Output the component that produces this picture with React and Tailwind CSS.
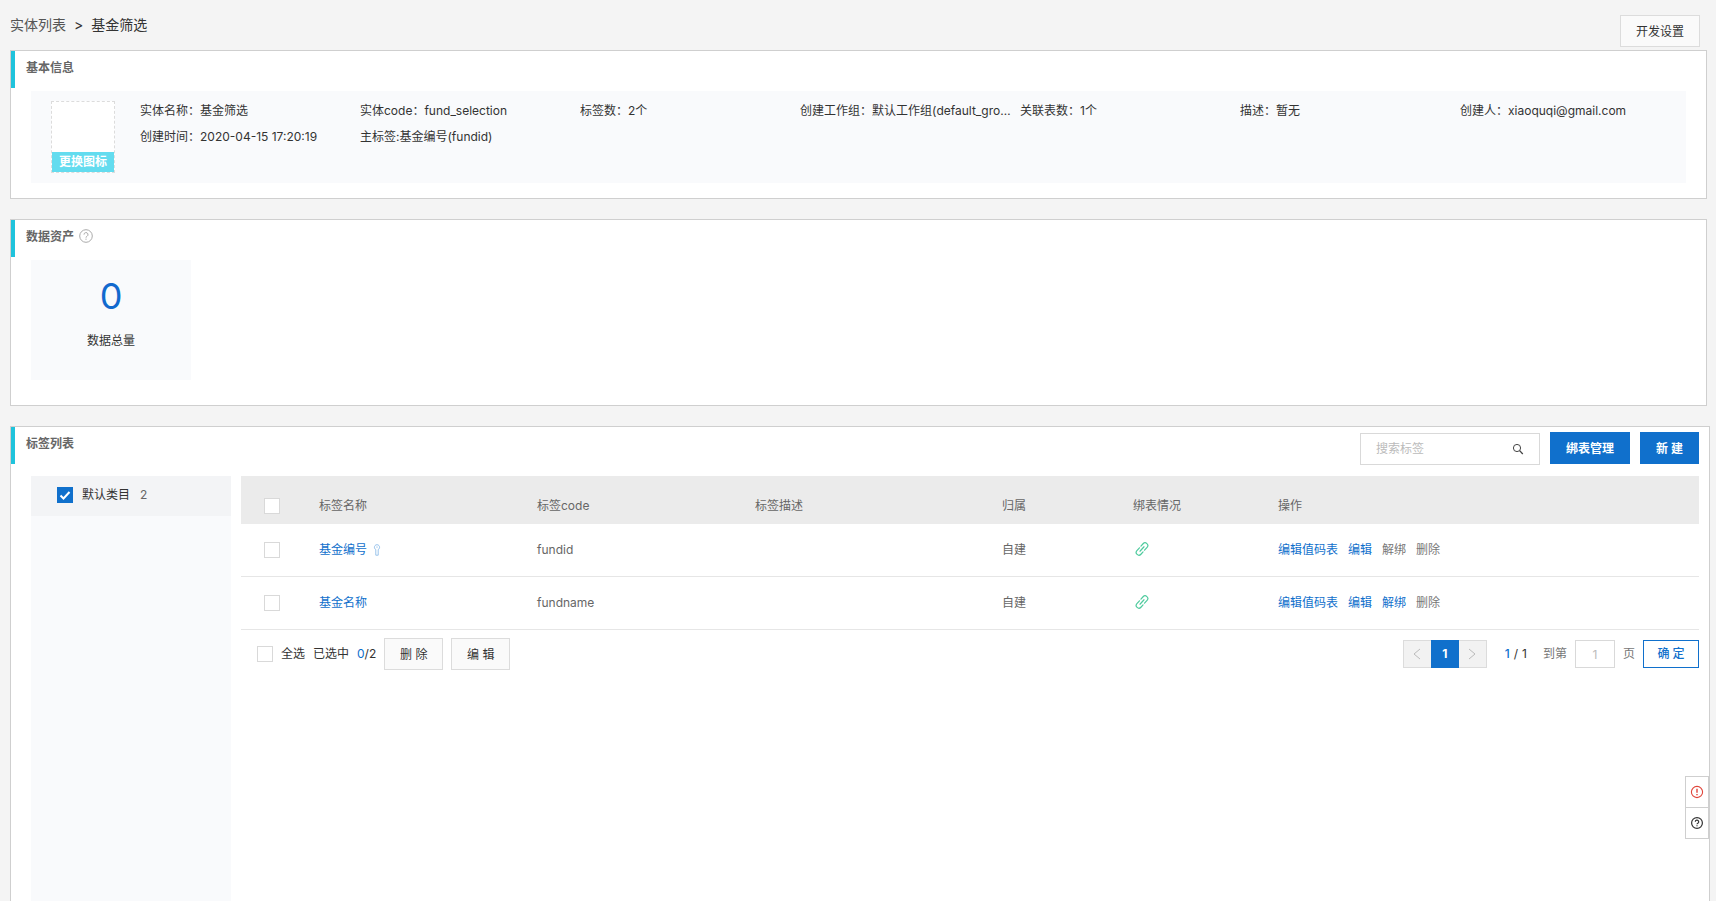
import { useState } from 'react';

const FONT = "font-['Inter','Noto_Sans_CJK_SC',sans-serif]";

const entityInfo = [
  { label: '实体名称：', value: '基金筛选' },
  { label: '实体code：', value: 'fund_selection' },
  { label: '标签数：', value: '2个' },
  { label: '创建工作组：', value: '默认工作组(default_group)' },
  { label: '关联表数：', value: '1个' },
  { label: '描述：', value: '暂无' },
  { label: '创建人：', value: 'xiaoquqi@gmail.com' },
  { label: '创建时间：', value: '2020-04-15 17:20:19' },
  { label: '主标签:', value: '基金编号(fundid)' },
];

const tags = [
  { name: '基金编号', code: 'fundid', desc: '', owner: '自建', isPrimary: true },
  { name: '基金名称', code: 'fundname', desc: '', owner: '自建', isPrimary: false },
];

function HelpIcon({ className, strokeWidth = 1 }) {
  return (
    <svg
      viewBox="0 0 14 14"
      fill="none"
      stroke="currentColor"
      strokeWidth={strokeWidth}
      className={className}
      aria-hidden="true"
    >
      <circle cx="7" cy="7" r="6.3" />
      <path d="M5 5.6a2 2 0 1 1 3 1.7c-.7.4-1 .7-1 1.3M7 9.6v1.2" />
    </svg>
  );
}

function AlertIcon({ className }) {
  return (
    <svg viewBox="0 0 14 14" fill="none" stroke="currentColor" className={className} aria-hidden="true">
      <circle cx="7" cy="7" r="5.6" strokeWidth="1.1" />
      <path d="M7 3.8v4M7 8.9v1.3" strokeWidth="1.4" />
    </svg>
  );
}

function SearchIcon({ className }) {
  return (
    <svg viewBox="0 0 12 12" fill="none" stroke="currentColor" className={className} aria-hidden="true">
      <circle cx="5" cy="5" r="3.6" />
      <path d="M7.6 7.6l3.2 3.4" strokeWidth="1.3" />
    </svg>
  );
}

function KeyIcon({ className }) {
  return (
    <svg viewBox="0 0 8 12" fill="none" stroke="currentColor" strokeWidth="0.9" className={className} aria-hidden="true">
      <path d="M2.8 5.6A2.6 2.6 0 1 1 5.2 5.6V11.2H2.8z" />
      <path d="M4 2.4v1.4" />
    </svg>
  );
}

function LinkIcon({ className }) {
  return (
    <svg
      viewBox="-8 -8 16 16"
      fill="none"
      stroke="currentColor"
      strokeWidth="1.2"
      strokeLinecap="round"
      className={className}
      aria-hidden="true"
    >
      <g transform="rotate(-48)">
        <path d="M-.8-2.7H-4.6a2.7 2.7 0 0 0 0 5.4H-1.4" />
        <path d="M.8 2.7H4.6a2.7 2.7 0 0 0 0-5.4H1.4" />
        <path d="M-3 0H3" />
      </g>
    </svg>
  );
}

function Checkbox({ label, ...props }) {
  return (
    <span className="relative block w-4 h-4 shrink-0">
      <input
        type="checkbox"
        aria-label={label}
        className="peer block appearance-none w-4 h-4 border border-[#d9d9d9] bg-white checked:bg-[#1070cc] checked:border-[#1070cc]"
        {...props}
      />
      <svg
        viewBox="0 0 16 16"
        fill="none"
        stroke="white"
        strokeWidth="2"
        className="absolute inset-0 hidden peer-checked:block pointer-events-none"
      >
        <path d="M3.5 8.5l3 3 6-6.5" />
      </svg>
    </span>
  );
}

function Panel({ title, extra, actions, className, children }) {
  return (
    <section className={`bg-white border border-[#cfcfcf] ${className}`}>
      <div className="flex items-start justify-between">
        <div className="flex h-[37px] border-l-4 border-[#1fc3dc] pl-[11px]">
          <h2 className="flex items-center h-[34px] text-xs font-bold text-[#666]">{title}</h2>
          {extra}
        </div>
        {actions}
      </div>
      {children}
    </section>
  );
}

function ActionLink({ disabled, children }) {
  return disabled ? (
    <button type="button" disabled className="text-[#777]">
      {children}
    </button>
  ) : (
    <a href="#" className="text-[#1070cc]">
      {children}
    </a>
  );
}

export default function App() {
  const [selected, setSelected] = useState([]);
  const allSelected = selected.length === tags.length;

  const toggle = (code) => {
    setSelected((prev) => (prev.includes(code) ? prev.filter((c) => c !== code) : [...prev, code]));
  };
  const toggleAll = () => setSelected(allSelected ? [] : tags.map((tag) => tag.code));

  return (
    <div className={`${FONT} flex flex-col min-h-screen bg-[#f4f4f4] text-xs text-[#333] px-[10px]`}>
      {/* Breadcrumb */}
      <header className="flex justify-between h-[50px] pr-[6px]">
        <nav className="flex items-center gap-2 text-sm">
          <a href="#" className="text-[#555]">实体列表</a>
          <span>&gt;</span>
          <span>基金筛选</span>
        </nav>
        <button type="button" className="self-end mb-[3px] h-8 w-20 border border-[#dcdcdc] bg-[#fafafa] pt-0.5">
          开发设置
        </button>
      </header>

      {/* Basic info */}
      <Panel title="基本信息" className="mr-[-1px] pb-[15px]">
        <div className="flex mt-[3px] ml-5 mr-5 h-[92px] bg-[#f9fafc] pl-5 pt-[10px]">
          <div className="flex flex-col justify-end shrink-0 w-16 h-[72px] border border-dashed border-[#dcdcdc] bg-white">
            <button type="button" className="h-5 bg-[#63dcef] font-bold text-white">更换图标</button>
          </div>
          <dl className="grow grid grid-cols-[repeat(auto-fill,220px)] auto-rows-[26px] -mt-[3px] ml-[25px]">
            {entityInfo.map((item) => (
              <div key={item.label} className="truncate leading-[26px] pr-2">
                <dt className="inline">{item.label}</dt>
                <dd className="inline">{item.value}</dd>
              </div>
            ))}
          </dl>
        </div>
      </Panel>

      {/* Data assets */}
      <Panel
        title="数据资产"
        extra={<HelpIcon className="w-[14px] h-[14px] mt-[9px] ml-[5px] text-[#aaa]" />}
        className="mt-5 mr-[-1px] pb-[25px]"
      >
        <div className="flex flex-col items-center w-40 h-[120px] mt-[3px] ml-5 bg-[#f9fafc]">
          <span className="mt-[14px] text-4xl leading-[44px] text-[#1269ce]">0</span>
          <span className="mt-[13px] leading-5">数据总量</span>
        </div>
      </Panel>

      {/* Tag list */}
      <Panel
        title="标签列表"
        className="grow flex flex-col mt-5 mr-[-4px] border-b-0"
        actions={
          <div className="flex items-start gap-[10px] pt-[5px] pr-[10px] h-[49px]">
            <label className="flex items-center mt-px w-[180px] h-8 border border-[#d9d9d9] px-[15px]">
              <input
                type="text"
                placeholder="搜索标签"
                aria-label="搜索标签"
                className="grow min-w-0 outline-none placeholder:text-[#bbb]"
              />
              <SearchIcon className="shrink-0 w-3 h-3 text-[#444]" />
            </label>
            <button type="button" className="h-8 w-20 bg-[#1070cc] pt-0.5 font-bold text-white">绑表管理</button>
            <button type="button" className="h-8 w-[59px] bg-[#1070cc] pt-0.5 font-bold text-white">新 建</button>
          </div>
        }
      >
        <div className="grow flex gap-[10px] pl-5 pr-[10px]">
          <aside className="w-[200px] shrink-0 bg-[#f9fafc]">
            <div className="flex items-center h-10 pl-[26px] pb-0.5 bg-[#f3f4f6]">
              <Checkbox label="默认类目" defaultChecked />
              <span className="ml-[9px]">默认类目</span>
              <span className="ml-[10px] text-[#666]">2</span>
            </div>
          </aside>

          <div className="grow min-w-0">
            <table className="w-full table-fixed border-separate border-spacing-0 text-left text-[#666]">
              <colgroup>
                <col className="w-[62px]" />
                <col className="w-[218px]" />
                <col className="w-[218px]" />
                <col className="w-[247px]" />
                <col className="w-[131px]" />
                <col className="w-[145px]" />
                <col />
              </colgroup>
              <thead>
                <tr className="h-12 bg-[#ebebeb] align-bottom">
                  <th className="pl-[23px] pb-[10px]">
                    <Checkbox label="全选标签" checked={allSelected} onChange={toggleAll} />
                  </th>
                  <th className="px-4 pb-[10px] font-normal">标签名称</th>
                  <th className="px-4 pb-[10px] font-normal">标签code</th>
                  <th className="px-4 pb-[10px] font-normal">标签描述</th>
                  <th className="px-4 pb-[10px] font-normal">归属</th>
                  <th className="px-4 pb-[10px] font-normal">绑表情况</th>
                  <th className="px-4 pb-[10px] font-normal">操作</th>
                </tr>
              </thead>
              <tbody>
                {tags.map((tag) => (
                  <tr key={tag.code} className="h-[53px] *:border-b *:border-[#e6e6e6]">
                    <td className="pl-[23px]">
                      <Checkbox label={tag.name} checked={selected.includes(tag.code)} onChange={() => toggle(tag.code)} />
                    </td>
                    <td className="px-4">
                      <div className="flex items-center gap-[6px]">
                        <a href="#" className="text-[#1070cc]">{tag.name}</a>
                        {tag.isPrimary && <KeyIcon className="w-2 h-3 text-[#8fbdea]" />}
                      </div>
                    </td>
                    <td className="px-4">{tag.code}</td>
                    <td className="px-4">{tag.desc}</td>
                    <td className="px-4">{tag.owner}</td>
                    <td className="px-4 pb-[3px]">
                      <LinkIcon className="w-4 h-4 ml-px text-[#4fcb9e]" />
                    </td>
                    <td className="px-4">
                      <div className="flex gap-[10px]">
                        <ActionLink>编辑值码表</ActionLink>
                        <ActionLink>编辑</ActionLink>
                        <ActionLink disabled={tag.isPrimary}>解绑</ActionLink>
                        <ActionLink disabled>删除</ActionLink>
                      </div>
                    </td>
                  </tr>
                ))}
              </tbody>
            </table>

            {/* Batch actions and pagination */}
            <div className="flex items-center justify-between pt-2 pl-4">
              <div className="flex items-center gap-2">
                <Checkbox label="全选" checked={allSelected} onChange={toggleAll} />
                <span>全选</span>
                <span>已选中</span>
                <span>
                  <span className="text-[#1070cc]">{selected.length}</span>/{tags.length}
                </span>
                <button type="button" className="h-8 w-[59px] border border-[#dcdcdc] bg-[#fafafa] pt-0.5">删 除</button>
                <button type="button" className="h-8 w-[59px] border border-[#dcdcdc] bg-[#fafafa] pt-0.5">编 辑</button>
              </div>
              <div className="flex items-center text-[#777]">
                <button type="button" aria-label="上一页" className="flex items-center justify-center w-7 h-7 border border-r-0 border-[#dcdcdc] bg-[#f2f2f2]">
                  <svg viewBox="0 0 8 12" fill="none" stroke="#bbb" className="w-2 h-3">
                    <path d="M7 1L1 6l6 5" />
                  </svg>
                </button>
                <button type="button" className="w-7 h-7 bg-[#1070cc] font-bold text-white">1</button>
                <button type="button" aria-label="下一页" className="flex items-center justify-center w-7 h-7 border border-l-0 border-[#dcdcdc] bg-[#f2f2f2]">
                  <svg viewBox="0 0 8 12" fill="none" stroke="#bbb" className="w-2 h-3">
                    <path d="M1 1l6 5-6 5" />
                  </svg>
                </button>
                <span className="flex gap-1 ml-[18px] text-[#333]">
                  <span className="font-medium text-[#1070cc]">1</span>
                  <span>/</span>
                  <span>1</span>
                </span>
                <label htmlFor="page-input" className="ml-4">到第</label>
                <input
                  id="page-input"
                  type="text"
                  placeholder="1"
                  className="ml-2 w-10 h-7 border border-[#d9d9d9] text-center placeholder:text-[#bbb]"
                />
                <span className="ml-2">页</span>
                <button type="button" className="ml-2 w-14 h-7 border border-[#1070cc] font-medium text-[#1070cc]">确 定</button>
              </div>
            </div>
          </div>
        </div>
      </Panel>

      {/* Floating feedback bar */}
      <div className="fixed right-[7px] bottom-[62px] flex flex-col w-6 border border-[#cfcfcf] bg-white divide-y divide-[#cfcfcf]">
        <button type="button" aria-label="告警" className="flex items-center justify-center h-[31px] text-[#e0453a]">
          <AlertIcon className="w-[14px] h-[14px]" />
        </button>
        <button type="button" aria-label="帮助" className="flex items-center justify-center h-[30px] text-[#333]">
          <HelpIcon className="w-3 h-3" strokeWidth={1.4} />
        </button>
      </div>
    </div>
  );
}
